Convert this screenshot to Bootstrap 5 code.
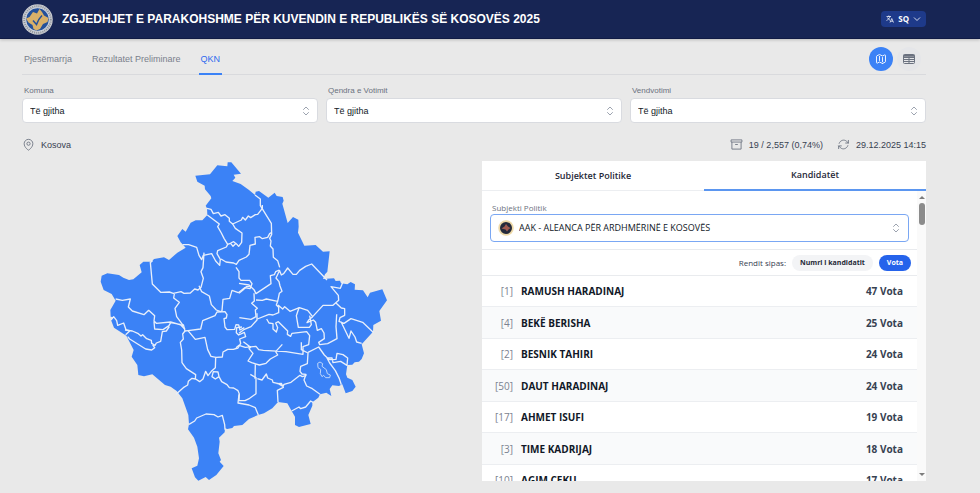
<!DOCTYPE html>
<html lang="sq">
<head>
<meta charset="utf-8">
<meta name="viewport" content="width=device-width, initial-scale=1">
<title>Zgjedhjet e parakohshme për Kuvendin e Republikës së Kosovës 2025</title>
<link href="https://cdn.jsdelivr.net/npm/bootstrap@5.3.0/dist/css/bootstrap.min.css" rel="stylesheet">
<style>
  body { background: #e9e9e9; color: #374151; font: 9px/12px "Liberation Sans", Arial, sans-serif; }
  svg { display: block; flex: none; }
  .page-x { padding-left: 22px; padding-right: 54px; }
  .site-header { background: #172554; height: 39px; border-bottom: 1px solid #101b45; box-shadow: 0 1px 3px rgba(0,0,0,.2); gap: 9px; }
  .site-title { font-size: 12px; line-height: 16px; font-weight: 700; color: #fff; }
  .lang-btn { background: #1e3a8a; color: #fff; border: 0; border-radius: 4px; height: 16px; padding: 0 5px; font: 700 8px/16px "Open Sans", sans-serif; gap: 4px; }
  .main-tabs { border-bottom: 1px solid #d9dadd; height: 36px; }
  .main-tabs .nav { gap: 16px; }
  .main-tabs .nav-link { color: #7a808c; padding: 14px 2px 8px; border-bottom: 2px solid transparent; margin-bottom: -1px; }
  .main-tabs .nav-link.active { color: #2f6bee; border-color: #3b82f6; }
  .view-btns { padding: 4px 5px 0 0; }
  .view-btn { width: 24px; height: 24px; border: 0; border-radius: 50%; background: #e5e6e9; color: #6b7280; }
  .view-btn.is-on { background: #3b82f6; color: #fff; }
  .filters { --bs-gutter-x: 8px; padding-top: 11px; }
  .field-label { font-size: 8px; line-height: 10px; color: #6b7280; padding-left: 2px; margin-bottom: 2px; }
  .picker { display: block; width: 100%; appearance: none; border: 1px solid #d9dbe0; border-radius: 4px; height: 25px; padding: 0 22px 0 7px; color: #111827;
    background: #fff url("data:image/svg+xml,%3Csvg xmlns='http://www.w3.org/2000/svg' viewBox='0 0 8 10' fill='none' stroke='%239ca3af' stroke-linecap='round' stroke-linejoin='round'%3E%3Cpath d='M1.500 3.500 4 1l2.500 2.500M1.500 6.500 4 9l2.500-2.500'/%3E%3C/svg%3E") no-repeat right 7px center / 8px 10px; }
  .info-row { height: 38px; padding-top: 5px; color: #374151; gap: 6px; }
  .info-row svg { color: #6b7280; }
  .kosovo { width: 100%; max-width: 290px; }
  .panel { background: #fff; height: 320px; font-family: "Open Sans", "Noto Sans", sans-serif; }
  .panel-tab { border: 0; background: none; height: 30px; font-size: 9px; font-weight: 600; color: #1f2937; border-bottom: 1px solid #eceef1; }
  .panel-tab.is-on { border-bottom: 2px solid #5b96f0; }
  .subject { padding: 12px 8px 7px; border-bottom: 1px solid #e9ebee; }
  .subject .field-label { margin-bottom: 1px; }
  .subject .picker { height: 28px; border-color: #7aa7f3; padding-left: 28px; font-weight: 500; font-size: 9px; background-position: right 8px center; }
  .party-logo { left: 8px; top: 6px; }
  .sort-row { height: 26px; gap: 6px; padding-right: 6px; font-size: 8px; border-bottom: 1px solid #e9ebee; }
  .pill { border: 0; border-radius: 8px; height: 16px; padding: 0 8px; font-size: 7px; font-weight: 700; line-height: 16px; background: #f3f4f6; color: #1f2937; }
  .pill.is-on { background: #2563eb; color: #fff; }
  .cand { height: 31px; padding-right: 14px; border-bottom: 1px solid #eceef1; font-size: 10px; font-weight: 700; }
  .cand:nth-child(even) { height: 32px; background: #f9fafb; }
  .cand-no { width: 31px; margin-right: 8px; text-align: right; font-weight: 400; color: #7b8290; }
  .cand-name { color: #111827; }
  .scroll-rail { width: 9px; background: #fafafa; padding: 5px 0; }
  .scroll-thumb { width: 6px; height: 22px; border-radius: 3px; background: #8b8b8b; margin-top: 4px; }
</style>
</head>
<body>
<header class="site-header page-x d-flex align-items-center">
  <svg width="31" height="31" viewBox="0 0 62 62" aria-hidden="true">
    <circle cx="31" cy="31" r="30.500" fill="#c9cbd0"/>
    <circle cx="31" cy="31" r="26.500" fill="none" stroke="#8b9099" stroke-width="4" stroke-dasharray="2 2.200"/>
    <circle cx="31" cy="31" r="23.500" fill="#24509a" stroke="#e3e6ea" stroke-width="1.500"/>
    <path d="M22 16l8 3 5-9 5 6 4 7 9 5-2 8-9 4-6 10-7 3-6-3-2-8-8-5-5-8 7-3z" fill="#d9b068"/>
    <path d="M22 33l7 8c2-7 5-12 11-18" fill="none" stroke="#24509a" stroke-width="3"/>
  </svg>
  <div class="site-title">ZGJEDHJET E PARAKOHSHME PËR KUVENDIN E REPUBLIKËS SË KOSOVËS 2025</div>
  <button class="lang-btn ms-auto d-flex align-items-center" type="button">
    <svg width="8" height="8" viewBox="0 0 16 16" fill="none" stroke="currentColor" stroke-width="1.500"><path d="M1 3h9M5.500 1v2M8 3c-1 4-3.500 6-7 8M3 5c1 2.500 3 4.500 5 5.500M8 15l3.500-8 3.500 8M9.300 12.500h4.400"/></svg>
    <span>SQ</span>
    <svg width="8" height="8" viewBox="0 0 8 8" fill="none" stroke="currentColor" stroke-width=".8"><path d="M1 2.500 4 5.500 7 2.500"/></svg>
  </button>
</header>

<main class="page-x">
  <div class="main-tabs d-flex justify-content-between">
    <nav class="nav flex-nowrap">
      <a class="nav-link" href="#">Pjesëmarrja</a>
      <a class="nav-link" href="#">Rezultatet Preliminare</a>
      <a class="nav-link active" href="#" aria-current="page">QKN</a>
    </nav>
    <div class="view-btns d-flex gap-1 align-items-center">
      <button class="view-btn is-on d-flex align-items-center justify-content-center p-0" type="button" aria-label="Harta">
        <svg width="12" height="12" viewBox="0 0 24 24" fill="none" stroke="currentColor" stroke-width="1.800" stroke-linejoin="round" stroke-linecap="round"><path d="M9 6.700V15m6-6v8.200m.5 3.500 4.900-2.400c.4-.2.600-.6.600-1V4.800c0-.8-.9-1.400-1.600-1l-3.900 1.900c-.3.200-.7.200-1 0L9.500 3.300a1 1 0 0 0-1 0L3.600 5.700c-.4.200-.6.600-.6 1v12.500c0 .8.900 1.400 1.600 1l3.900-1.900a1 1 0 0 1 1 0l5 2.400c.3.200.7.200 1 0z"/></svg>
      </button>
      <button class="view-btn d-flex align-items-center justify-content-center p-0" type="button" aria-label="Tabela">
        <svg width="12" height="10" viewBox="0 0 24 20" fill="none" stroke="currentColor" stroke-width="2"><rect x="1" y="1" width="22" height="18" rx="2"/><path d="M1 3.500h22" stroke-width="4"/><path d="M1 7h22M1 11h22M1 15h22M12 5v14"/></svg>
      </button>
    </div>
  </div>

  <form class="filters row">
    <div class="col-4"><label class="field-label d-block" for="komuna">Komuna</label>
      <select class="picker" id="komuna"><option>Të gjitha</option></select></div>
    <div class="col-4"><label class="field-label d-block" for="qendra">Qendra e Votimit</label>
      <select class="picker" id="qendra"><option>Të gjitha</option></select></div>
    <div class="col-4"><label class="field-label d-block" for="vendi">Vendvotimi</label>
      <select class="picker" id="vendi"><option>Të gjitha</option></select></div>
  </form>

  <div class="info-row d-flex align-items-center">
    <svg width="13" height="13" viewBox="0 0 24 24" fill="none" stroke="currentColor" stroke-width="1.600"><path d="M15 10.500a3 3 0 1 1-6 0 3 3 0 0 1 6 0z"/><path d="M20 10.500C20 17.600 12 22.500 12 22.500S4 17.600 4 10.500a8 8 0 1 1 16 0z"/></svg>
    <span>Kosova</span>
    <svg class="ms-auto" width="13" height="13" viewBox="0 0 24 24" fill="none" stroke="currentColor" stroke-width="1.600" stroke-linejoin="round"><path d="M2 3.500h20v4H2zM3.500 7.500v13h17v-13M9.500 12h5"/></svg>
    <span class="me-2">19 / 2,557 (0,74%)</span>
    <svg width="13" height="13" viewBox="0 0 24 24" fill="none" stroke="currentColor" stroke-width="1.600" stroke-linecap="round" stroke-linejoin="round"><path d="M16 9.300h5V4.400M3 19.600v-5h5M3 14.600l3.200 3.200a8.300 8.300 0 0 0 13.800-3.700M4 9.900a8.300 8.300 0 0 1 13.800-3.700L21 9.300"/></svg>
    <span>29.12.2025 14:15</span>
  </div>

  <div class="row gx-3">
    <div class="col-6">
      <svg class="kosovo mx-auto" viewBox="30 18 870 963" role="img" aria-label="Harta e Kosovës">
        <path fill="#3b82f6" d="M319 62 363 58 385 31 415 34 416 22 427 22 456 56 434 59 439 68 430 78 455 87 480 105 498 120 500 110 510 108 538 128 557 113 563 123 581 126 584 137 580 146 596 204 612 186 628 194 629 215 627 233 646 272 680 270 702 290 722 289 715 350 708 358 702 372 735 370 740 378 753 377 756 385 775 388 785 381 798 388 797 404 822 406 836 427 843 413 880 403 894 436 871 468 876 497 853 510 852 530 818 568 825 595 818 612 810 620 797 622 790 629 775 630 771 658 775 668 790 675 800 695 790 708 770 715 760 688 750 693 730 691 722 702 727 723 712 713 693 718 688 728 670 742 670 752 658 780 665 807 653 810 630 816 618 810 618 785 608 768 595 745 567 741 550 760 525 775 507 780 480 792 460 810 435 813 430 819 415 822 408 820 407 832 390 848 392 860 388 895 396 915 392 920 404 933 382 960 360 975 350 966 328 977 318 967 308 940 325 932 330 910 325 875 315 848 297 823 300 808 298 780 280 730 263 708 245 695 228 690 190 658 165 664 148 660 145 630 128 605 134 585 112 542 75 518 66 495 75 487 65 485 64 465 80 437 68 417 44 405 35 380 38 362 55 355 90 360 103 368 120 375 133 373 158 352 152 330 163 320 188 320 195 312 225 307 240 315 265 293 290 278 275 262 265 243 280 222 290 230 305 203 320 196 340 196 355 180 354 160 350 152 367 130 365 123 348 103 347 92 325 80z"/>
        <g fill="none" stroke="#e8effb" stroke-width="4" stroke-linejoin="round">
          <path d="M354 160l12 3 7 13 15-4 8 11 12-4 13 11v9l10 8 26-12 4-8 8 8 9-12 7 5 14-9 7-1 14-18 0-10M355 180l36 27-5 8 11 19 8 16 11 18-4 8-26 11-2 9 10 17-2 18-12-13-12-22-25 5-5 13-8-13-7-24-24-8-18 0"/>
          <path d="M431 207l8 13 20 14-1 28-9 12-8-9-9 9-7-9-10 3M425 264l9-4 12 10M396 312l15 9 23 3 8 4 8-12 22-10 8-8 3-27 16-4-1-20 14-2 8 6 16-4 6-11 5-3M498 120l16 12 0 20 33 53 1 33-6 12 4 8-2 15 8 9 1 25 13 10 6 20"/>
          <path d="M345 293l-3 45-6 12 7 20-7 27-9 8-10-3-13 12-19 1-9-5-23 5-12-4-26 1-25-25-6-65 5-3-2-4M330 392l8 18 23 13 6 26 15 16 13 5 4-3 3-34 20-3 7-24 19 7 19-15 16 3 6-15-7-10-26 0-6-7 0-19-9-13"/>
          <path d="M80 432l20 4 24-4-6 24 12 12 35 11 14-13 18 16-2 16 7 7 43-4 38 11-20-27-5-25 13-18-17-13 2-12M66 495l8-10 9 12 3 14 18-7 7 20 12 3-13 12M108 525l22 3 18 8 8 7 5-4 12 12 14 5 1 9 10 6 4-7 13-5 5-29 12-2 9-13M116 545l6 7 48 30 18 3 9-7-6-8M195 500l2 22 25 2 18-12 5-9 28 5 15 15"/>
          <path d="M283 508l5 20 9-1 38-5 6-25 37-15 6-11 24-1 6 9-2 10-7 2 3 25 6 8 23-1 4-14 8 1 4 15 13-7"/>
          <path d="M288 528l-7 9 2 15-9 10 4 23 1 38 13 18 28 18-1 13-10-2-11 9-2 11-13 8-22 20M297 527l22 26 29-6 8 37 10 20 15 3 19-1 2-15 14-8 17 0 14-4 8-14-3-13 18-7-4-13-17 8-7-7 1-15 16-2M380 608l-1 30-12 11-10 13-7-13-8 23-10 8-12-8M373 650l-4 15 10 7 11-7-3-14zM390 665l8 15 16 9 7 9 13 1 13 8 4 10-1 20 18 0 14-7 19-14 0-48-17-10"/>
          <path d="M300 808l17-10 6-9 28-12 24 2 12 7 13-5 7 28 1 15M450 718l-3 26 33 6 19 8 9 22M505 671l14 4 13-18 4 12 14 6 2 7 16 4 14 8 3-6 21-6 27-21 7 4 12-4M567 741l-2-35 18-9-6-12-14 1M499 628l-1 43M608 768l22-12 5 5 15-5 15-18 7 4"/>
          <path d="M571 345l-11 5-4 9-12 3 2 24-45 30-6-12-15-14-30-5M571 345l6 15 7-4 12-17 16 19 10 0 10-12 18-12 18-7 46 48M450 415l12-10 10-10 10-1M495 415l1 23-8 7 17 15-6 5 2 20-15 8-35-5M501 435l19 1 12-4 34 7 5-24 8-6-6-16-3-13-9-11 10-21M566 439l-4 11 7 7 0 16-17 7-12-2-35 14M567 450l14 12 6-7 16 14 28-11 25 8 15 19 31-34 30 0 17-15-1-15-22-26 28 5 9-22"/>
          <path d="M630 458l-8 24 6 35 33 0 6-8-5-27M671 485l-12 10-5 8 19-8 7 7 5 24 12-5 8 13 1 17-17 11 3 7 24-3 28-15-3-36 2-37M740 443l17 16 10 2 0 20-14 7-3 11 15 6 21-14 35 11 33 31M756 500l24 50 6-22 12 18 5 15 15 4"/>
          <path d="M533 492l7 12 12 2 0 16 10 9 4-13-6-14 8-4 28 28-1 10 10 6 4-9 44-5 9 12-3 27-17 6 0 23-51-8-68-4-14-2-8-10-32 3-19-6-9 7M463 560l22 17-5 4 12 14-15 23 11 5 23 7 20-5 13-13 22-12-6-10 20-22M637 562l0 22 20 10-2 32-20 8-2 15 6 8 12 1-6 17 8 18 17 8 23 17"/>
          <path d="M657 592l32-16 17 24 15 14 20-1 3-18 18 4 14 10-2 22-19-12-23 4-3-14-15 0 8 15 17 23 12 24 6 18M450 535l16-12 20-8 18-20 0-20"/>
          <path stroke-width="3" stroke="#bed6fb" d="M686 625l7-4 8 5-2 8 13 10 3 12 9 4-2 8-12 0-6-7-5 4-5-9 1-13-8-5z"/>
        </g>
      </svg>
    </div>
    <div class="col-6">
      <section class="panel d-flex flex-column overflow-hidden">
        <div class="d-flex" role="tablist">
          <button class="panel-tab flex-fill w-50" type="button" role="tab" aria-selected="false">Subjektet Politike</button>
          <button class="panel-tab is-on flex-fill w-50" type="button" role="tab" aria-selected="true">Kandidatët</button>
        </div>
        <div class="d-flex flex-fill overflow-hidden">
          <div class="flex-fill overflow-hidden">
            <div class="subject">
              <label class="field-label d-block" for="subjekti">Subjekti Politik</label>
              <div class="position-relative">
                <select class="picker" id="subjekti"><option>AAK - ALEANCA PËR ARDHMËRINË E KOSOVËS</option></select>
                <svg class="party-logo position-absolute" width="16" height="16" viewBox="0 0 32 32" aria-hidden="true"><circle cx="16" cy="16" r="15.500" fill="#eed9a8"/><circle cx="16" cy="16" r="12" fill="#252a3b"/><path d="M7 17l6-4 3-5 4 5 5 3-4 3-3 4-3-4z" fill="#a05a50"/></svg>
              </div>
            </div>
            <div class="sort-row d-flex align-items-center justify-content-end">
              <span>Rendit sipas:</span>
              <button class="pill" type="button">Numri i kandidatit</button>
              <button class="pill is-on" type="button">Vota</button>
            </div>
            <ul class="list-unstyled mb-0">
              <li class="cand d-flex align-items-center"><span class="cand-no">[1]</span><span class="cand-name">RAMUSH HARADINAJ</span><span class="ms-auto">47 Vota</span></li>
              <li class="cand d-flex align-items-center"><span class="cand-no">[4]</span><span class="cand-name">BEKË BERISHA</span><span class="ms-auto">25 Vota</span></li>
              <li class="cand d-flex align-items-center"><span class="cand-no">[2]</span><span class="cand-name">BESNIK TAHIRI</span><span class="ms-auto">24 Vota</span></li>
              <li class="cand d-flex align-items-center"><span class="cand-no">[50]</span><span class="cand-name">DAUT HARADINAJ</span><span class="ms-auto">24 Vota</span></li>
              <li class="cand d-flex align-items-center"><span class="cand-no">[17]</span><span class="cand-name">AHMET ISUFI</span><span class="ms-auto">19 Vota</span></li>
              <li class="cand d-flex align-items-center"><span class="cand-no">[3]</span><span class="cand-name">TIME KADRIJAJ</span><span class="ms-auto">18 Vota</span></li>
              <li class="cand d-flex align-items-center"><span class="cand-no">[10]</span><span class="cand-name">AGIM ÇEKU</span><span class="ms-auto">17 Vota</span></li>
            </ul>
          </div>
          <div class="scroll-rail d-flex flex-column align-items-center" aria-hidden="true">
            <svg width="6" height="3" viewBox="0 0 6 3"><path d="M0 3 3 0 6 3z" fill="#7d7d7d"/></svg>
            <div class="scroll-thumb"></div>
            <svg class="mt-auto" width="6" height="3" viewBox="0 0 6 3"><path d="M0 0 3 3 6 0z" fill="#7d7d7d"/></svg>
          </div>
        </div>
      </section>
    </div>
  </div>
</main>
</body>
</html>
